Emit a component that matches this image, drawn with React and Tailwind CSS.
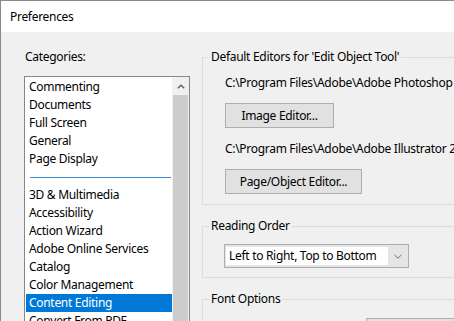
import { useState } from 'react';

const categoriesTop = ['Commenting', 'Documents', 'Full Screen', 'General', 'Page Display'];
const categoriesBottom = [
  '3D & Multimedia',
  'Accessibility',
  'Action Wizard',
  'Adobe Online Services',
  'Catalog',
  'Color Management',
  'Content Editing',
  'Convert From PDF',
];

// fieldset keeps the legend sitting on the top border like a win32 group box
const GroupBox = ({ title, className = '', bodyClass = '', children }) => (
  <fieldset className={`border border-[#dcdcdc] w-[300px] ${className}`}>
    <legend className="ml-[6px] px-[2px] leading-[18px]">{title}</legend>
    <div className={bodyClass}>{children}</div>
  </fieldset>
);

const Button = ({ children, className = '' }) => (
  <button className={`h-[25px] border border-[#adadad] bg-[#e1e1e1] flex items-center justify-center ${className}`}>
    {children}
  </button>
);

const App = () => {
  const [selected, setSelected] = useState('Content Editing');

  const Item = ({ name }) => (
    <div
      onClick={() => setSelected(name)}
      className={`h-[18px] leading-[18px] ml-[1px] pl-[3px] whitespace-nowrap ${
        selected === name ? 'bg-[#0078d7] text-white' : ''
      }`}
    >
      {name}
    </div>
  );

  return (
    <div className="w-[454px] h-[321px] overflow-hidden bg-[#f0f0f0] border-l border-t border-[#8a8a8a] text-[12px] text-black font-['Noto_Sans',sans-serif] tracking-[-0.3px] flex flex-col">
      {/* Title bar */}
      <div className="h-[31px] shrink-0 bg-white flex items-center pl-[9px]">Preferences</div>

      <div className="flex flex-1 min-h-0 pt-[16px] pl-[23px] gap-[12px]">
        {/* Categories */}
        <div className="w-[166px] shrink-0 flex flex-col">
          <div className="leading-[18px] pl-[1px]">Categories:</div>
          <div className="mt-[10px] flex-1 border border-[#828790] bg-white flex">
            <div className="w-[147px] pt-[1px]">
              {categoriesTop.map((c) => (
                <Item key={c} name={c} />
              ))}
              <div className="h-[18px] flex items-center ml-[5px] mr-[1px]">
                <div className="h-px w-full bg-[#3a8ad4]" />
              </div>
              {categoriesBottom.map((c) => (
                <Item key={c} name={c} />
              ))}
            </div>
            {/* Scrollbar */}
            <div className="w-[17px] bg-[#f0f0f0] flex flex-col">
              <div className="h-[18px] flex items-center justify-center">
                <svg width="8" height="5" viewBox="0 0 8 5">
                  <path d="M0.8 4.3 L4 1.2 L7.2 4.3" fill="none" stroke="#606060" strokeWidth="1.4" />
                </svg>
              </div>
              <div className="flex-1 mx-[1px] bg-[#cdcdcd]" />
            </div>
          </div>
        </div>

        {/* Right panels */}
        <div className="flex-1 flex flex-col">
          <GroupBox title="Default Editors for 'Edit Object Tool'" bodyClass="pl-[22px] pt-[8px] pb-[10px]">
            <div className="leading-[18px] whitespace-nowrap">C:\Program Files\Adobe\Adobe Photoshop 2020\Photoshop.exe</div>
            <Button className="mt-[11px] w-[109px]">Image Editor...</Button>
            <div className="mt-[12px] leading-[18px] whitespace-nowrap">C:\Program Files\Adobe\Adobe Illustrator 2020\Support Files</div>
            <Button className="mt-[11px] w-[137px]">Page/Object Editor...</Button>
          </GroupBox>

          <GroupBox title="Reading Order" className="mt-[12px]" bodyClass="pl-[21px] pt-[9px] pb-[9px]">
            <div className="w-[185px] h-[24px] border border-[#adadad] bg-[#e5e5e5] flex items-center pl-[1px]">
              <div className="w-[162px] h-[18px] bg-white leading-[18px] pl-[3px] whitespace-nowrap">
                Left to Right, Top to Bottom
              </div>
              <div className="flex-1 flex items-center justify-center">
                <svg width="8" height="5" viewBox="0 0 8 5">
                  <path d="M0.5 0.8 L4 4.2 L7.5 0.8" fill="none" stroke="#707070" strokeWidth="1" />
                </svg>
              </div>
            </div>
          </GroupBox>

          <GroupBox title="Font Options" className="mt-[12px]" bodyClass="pl-[163px] pt-[10px] h-[60px]">
            <div className="w-[120px] h-[24px] border border-[#adadad] bg-[#e1e1e1]" />
          </GroupBox>
        </div>
      </div>
    </div>
  );
};

export default App;
